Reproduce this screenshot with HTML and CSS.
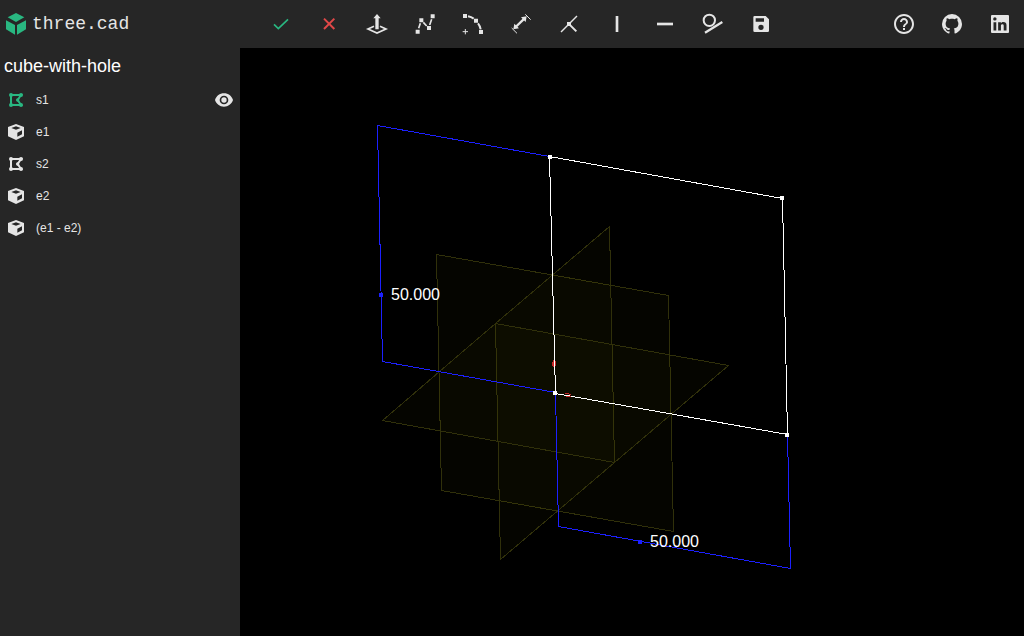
FILE: index.html
```html
<!DOCTYPE html>
<html lang="en">
<head>
<meta charset="utf-8">
<meta name="viewport" content="width=device-width, initial-scale=1">
<title>three.cad</title>
<link rel="stylesheet" href="styles.css">
</head>
<body class="app">
<svg class="symbols" aria-hidden="true">
  <symbol id="sketch" viewBox="0 0 48 48">
    <path d="M9 9H39L29 24L39 39H9Z" fill="none" stroke="currentColor" stroke-width="6"/>
    <g fill="currentColor"><circle cx="9" cy="9" r="6"/><circle cx="39" cy="9" r="6"/><circle cx="39" cy="39" r="6"/><circle cx="9" cy="39" r="6"/><circle cx="29" cy="24" r="5"/></g>
  </symbol>
  <symbol id="solid" viewBox="0 0 48 48">
    <path fill="currentColor" fill-rule="evenodd" d="M24 0L48 9V37L24 48L0 37V9ZM10 12L24 17L38 12L24 7ZM28 26V38L42 31V19Z"/>
  </symbol>
</svg>
<header class="topbar">
  <a class="brand" href="#">
    <svg class="logo" viewBox="0 0 72 72" aria-hidden="true"><path fill="currentColor" d="M36 3L61 16L36 30L11 16ZM6 25L33 39V68L6 52ZM66 25L39 39V68L66 52Z"/></svg>
    <span class="brand-name">three.cad</span>
  </a>
  <nav class="tools" aria-label="Sketch tools">
    <button class="tool accept" aria-label="Finish"><svg class="icon" viewBox="0 0 72 72"><path class="line" stroke-width="5" d="M15 37L28 50L57 22"/></svg></button>
    <button class="tool cancel" aria-label="Cancel"><svg class="icon" viewBox="0 0 72 72"><path class="line" stroke-width="6" d="M21 20L52 51M52 20L21 51"/></svg></button>
    <button class="tool" aria-label="Extrude"><svg class="icon" viewBox="0 0 72 72"><path class="line" stroke-width="5" d="M27 43L9 51L36 63L63 51L45 43"/><path fill="currentColor" d="M36 6L47 19H41V52H31V19H25Z"/></svg></button>
    <button class="tool" aria-label="Line"><svg class="icon" viewBox="0 0 72 72"><path class="line" stroke-width="5" d="M17 49L22 34M31 31L41 42M50 39L56 22"/><path fill="currentColor" d="M8 53h12v12H8zM19 19h12v12H19zM42 42h12v12H42zM53 7h12v12H53z"/></svg></button>
    <button class="tool" aria-label="Arc"><svg class="icon" viewBox="0 0 72 72"><path class="line" stroke-width="6" d="M21 13Q31 15 38 20M51 34Q57 41 59 52"/><path class="line" stroke-width="3" d="M13 51V67M5 59H21"/><path fill="currentColor" d="M6 6h12v12H6zM39 20h12v12H39zM54 54h12v12H54z"/></svg></button>
    <button class="tool" aria-label="Dimension"><svg class="icon" viewBox="0 0 72 72"><path class="line" stroke-width="7" d="M20 45L46 20"/><path class="line" stroke-width="3" d="M49 7L65 23M8 48L24 64"/><path fill="currentColor" d="M53 13L50 30L36 16ZM13 52L16 35L30 49Z"/></svg></button>
    <button class="tool" aria-label="Coincident"><svg class="icon" viewBox="0 0 72 72"><path class="line" stroke-width="4" d="M12 60L60 12"/><path class="line" stroke-width="6" d="M40 40L58 58"/><path fill="currentColor" d="M30 30h12v12H30z"/></svg></button>
    <button class="tool" aria-label="Vertical"><svg class="icon" viewBox="0 0 72 72"><path class="line" stroke-width="8" d="M36 12V60"/></svg></button>
    <button class="tool" aria-label="Horizontal"><svg class="icon" viewBox="0 0 72 72"><path class="line" stroke-width="8" d="M12 36H60"/></svg></button>
    <button class="tool" aria-label="Tangent"><svg class="icon" viewBox="0 0 72 72"><circle class="line" stroke-width="6" cx="25" cy="25" r="17"/><path class="line" stroke-width="7" d="M12 62L64 30"/></svg></button>
    <button class="tool" aria-label="Save"><svg class="icon" viewBox="0 0 72 72"><path fill="currentColor" fill-rule="evenodd" d="M17 12H50L60 22V56Q60 60 56 60H17Q13 60 13 56V16Q13 12 17 12ZM20 19V29H45V19ZM36 38A8 8 0 1 0 36 54A8 8 0 1 0 36 38Z"/></svg></button>
  </nav>
  <nav class="links" aria-label="Links">
    <button class="tool" aria-label="Help"><svg class="icon" viewBox="0 0 24 24"><path fill="currentColor" d="M11 18h2v-2h-2v2zm1-16C6.48 2 2 6.48 2 12s4.48 10 10 10 10-4.48 10-10S17.520 2 12 2zm0 18c-4.410 0-8-3.590-8-8s3.590-8 8-8 8 3.590 8 8-3.590 8-8 8zm0-14c-2.210 0-4 1.790-4 4h2c0-1.100.9-2 2-2s2 .9 2 2c0 2-3 1.750-3 5h2c0-2.250 3-2.500 3-5 0-2.210-1.790-4-4-4z"/></svg></button>
    <a class="tool" href="#" aria-label="GitHub"><svg class="icon" viewBox="0 0 24 24"><path fill="currentColor" d="M12,2A10,10 0 0,0 2,12C2,16.42 4.87,20.17 8.84,21.5C9.34,21.58 9.5,21.27 9.5,21C9.5,20.77 9.5,20.14 9.5,19.31C6.73,19.91 6.14,17.97 6.14,17.97C5.68,16.81 5.03,16.5 5.03,16.5C4.12,15.88 5.1,15.9 5.1,15.9C6.1,15.97 6.63,16.93 6.63,16.93C7.5,18.45 8.97,18 9.54,17.76C9.63,17.11 9.89,16.67 10.17,16.42C7.95,16.17 5.62,15.31 5.62,11.5C5.62,10.39 6,9.5 6.65,8.79C6.55,8.54 6.2,7.5 6.75,6.15C6.75,6.15 7.59,5.88 9.5,7.17C10.29,6.95 11.15,6.84 12,6.84C12.85,6.84 13.71,6.95 14.5,7.17C16.41,5.88 17.25,6.15 17.25,6.15C17.8,7.5 17.45,8.54 17.35,8.79C18,9.5 18.38,10.39 18.38,11.5C18.38,15.32 16.04,16.16 13.81,16.41C14.17,16.72 14.5,17.33 14.5,18.26C14.5,19.6 14.5,20.68 14.5,21C14.5,21.27 14.66,21.59 15.17,21.5C19.14,20.16 22,16.42 22,12A10,10 0 0,0 12,2Z"/></svg></a>
    <a class="tool" href="#" aria-label="LinkedIn"><svg class="icon" viewBox="0 0 24 24"><path fill="currentColor" d="M20 3a1 1 0 0 1 1 1v16a1 1 0 0 1-1 1H4a1 1 0 0 1-1-1V4a1 1 0 0 1 1-1h16m-1.500 15.500v-5.300a3.260 3.260 0 0 0-3.260-3.260c-.85 0-1.840.52-2.320 1.300v-1.110h-2.790v8.370h2.790v-4.930c0-.77.62-1.400 1.390-1.400a1.400 1.400 0 0 1 1.400 1.400v4.930h2.790M6.880 8.560a1.680 1.680 0 0 0 1.680-1.680c0-.93-.75-1.690-1.680-1.690a1.690 1.690 0 0 0-1.690 1.690c0 .93.76 1.680 1.690 1.680m1.390 9.940v-8.370H5.500v8.370h2.770z"/></svg></a>
  </nav>
</header>
<div class="workspace">
  <aside class="sidebar">
    <h1 class="title">cube-with-hole</h1>
    <ul class="tree">
      <li class="node">
        <svg class="node-icon active" aria-hidden="true"><use href="#sketch"/></svg><span class="node-name">s1</span>
        <button class="eye" aria-label="Toggle visibility of s1"><svg class="eye-icon" viewBox="0 0 54 54"><path fill="currentColor" fill-rule="evenodd" d="M27 7C14 7 4 15 0 27C4 39 14 47 27 47S50 39 54 27C50 15 40 7 27 7ZM27 14A13 13 0 1 1 27 40A13 13 0 1 1 27 14Z"/><circle cx="27" cy="27" r="8" fill="currentColor"/></svg></button>
      </li>
      <li class="node"><svg class="node-icon" aria-hidden="true"><use href="#solid"/></svg><span class="node-name">e1</span></li>
      <li class="node"><svg class="node-icon" aria-hidden="true"><use href="#sketch"/></svg><span class="node-name">s2</span></li>
      <li class="node"><svg class="node-icon" aria-hidden="true"><use href="#solid"/></svg><span class="node-name">e2</span></li>
      <li class="node"><svg class="node-icon" aria-hidden="true"><use href="#solid"/></svg><span class="node-name">(e1 - e2)</span></li>
    </ul>
  </aside>
  <main class="viewport">
    <svg class="scene" viewBox="240 48 784 588" role="img" aria-label="Sketch s1">
      <g class="planes">
        <path d="M436.500 254.500L668.500 295.500L673.500 531.500L441.500 490.500Z"/>
        <path d="M609.500 226.500L614.500 462.500L500.500 559.500L495.500 323.500Z"/>
        <path d="M495.500 323.500L728.500 365.500L614.500 462.500L382.500 420.500Z"/>
      </g>
      <path class="dims" d="M549.500 156.500L377.500 125.500L382.500 361.500L555.500 392.500L558.500 526.500L790.500 568.500L787.500 434.500"/>
      <path class="handles" d="M379 293h4v4h-4zM638 540h4v4h-4z"/>
      <path class="outline" d="M549.500 156.500L782.500 198.500L787.500 434.500L555.500 393.500Z"/>
      <path class="marks" d="M552 362h1v4h-1zM553 360h1v7h-1zM555 361h1v5h-1zM565 393h4v1h-4zM566 396h5v1h-5zM569 394h2v1h-2z"/>
      <path class="points" d="M548 155h4v4h-4zM780 196h4v4h-4zM785 433h4v4h-4zM553 391h4v4h-4z"/>
      <text class="label" x="391" y="300">50.000</text>
      <text class="label" x="650" y="547">50.000</text>
    </svg>
  </main>
</div>
</body>
</html>
```
FILE: styles.css
```css
* {
  box-sizing: border-box;
}

.app {
  display: flex;
  flex-direction: column;
  min-height: 100vh;
  margin: 0;
  background: #000;
  color: #e5e5e5;
  font-family: "Liberation Sans", Arial, sans-serif;
}

.symbols {
  display: none;
}

.topbar {
  display: flex;
  justify-content: space-between;
  height: 48px;
  background: #262626;
}

.brand {
  display: flex;
  align-items: center;
  gap: 4px;
  padding: 0 33px 0 4px;
  color: #e5e5e5;
  text-decoration: none;
}

.logo {
  width: 24px;
  height: 24px;
  color: #29b781;
}

.brand-name {
  font: 18px/28px "Liberation Mono", "Courier New", monospace;
}

.tools,
.links {
  display: flex;
}

.tool {
  display: flex;
  align-items: center;
  justify-content: center;
  width: 48px;
  height: 48px;
  padding: 0;
  border: 0;
  background: none;
  color: #e5e5e5;
  cursor: pointer;
}

.accept {
  color: #29b781;
}

.cancel {
  color: #e04848;
}

.icon {
  width: 24px;
  height: 24px;
}

.line {
  fill: none;
  stroke: currentColor;
}

.workspace {
  display: flex;
  flex: 1;
}

.sidebar {
  flex: 0 0 240px;
  background: #262626;
}

.title {
  margin: 0;
  padding: 4px;
  color: #fff;
  font-size: 18px;
  font-weight: 400;
  line-height: 28px;
}

.tree {
  margin: 0;
  padding: 0;
  list-style: none;
}

.node {
  display: flex;
  align-items: center;
  gap: 12px;
  height: 32px;
  padding: 0 7px 0 8px;
  font-size: 12px;
  line-height: 16px;
}

.node-icon {
  width: 16px;
  height: 16px;
}

.active {
  color: #29b781;
}

.eye {
  display: flex;
  margin-left: auto;
  padding: 0;
  border: 0;
  background: none;
  color: #e5e5e5;
  cursor: pointer;
}

.eye-icon {
  width: 18px;
  height: 18px;
}

.viewport {
  display: flex;
  flex: 1;
  min-width: 0;
}

.scene {
  flex: 1;
  min-width: 0;
  shape-rendering: crispEdges;
}

.planes {
  fill: rgba(255, 255, 0, 0.02);
  stroke: #30300a;
}

.dims {
  fill: none;
  stroke: #1c20ff;
}

.handles {
  fill: #1c20ff;
}

.marks {
  fill: #c82828;
}

.outline {
  fill: none;
  stroke: #fff;
}

.points {
  fill: #fff;
}

.label {
  fill: #fff;
  font-size: 16px;
}
```
